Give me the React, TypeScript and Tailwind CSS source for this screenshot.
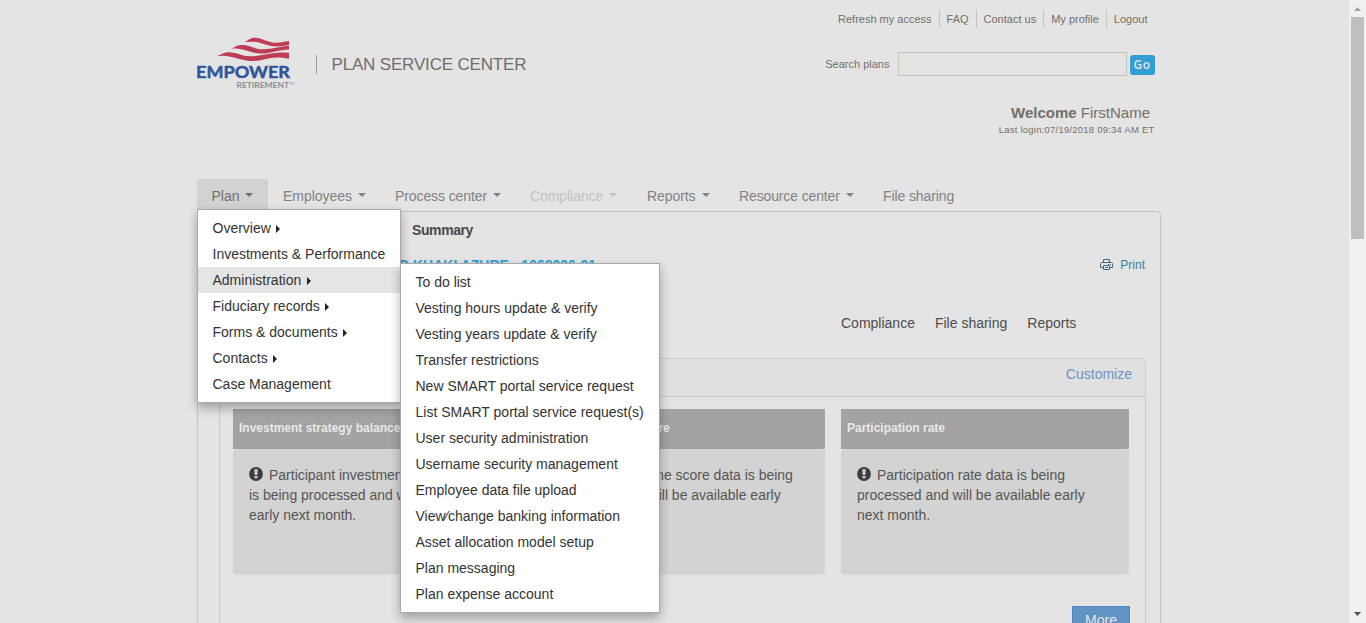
import React from 'react';

const topLinks = ['Refresh my access', 'FAQ', 'Contact us', 'My profile', 'Logout'];

const planMenu = [
  { label: 'Overview', sub: true },
  { label: 'Investments & Performance', sub: false },
  { label: 'Administration', sub: true },
  { label: 'Fiduciary records', sub: true },
  { label: 'Forms & documents', sub: true },
  { label: 'Contacts', sub: true },
  { label: 'Case Management', sub: false },
];

const adminMenu = [
  'To do list',
  'Vesting hours update & verify',
  'Vesting years update & verify',
  'Transfer restrictions',
  'New SMART portal service request',
  'List SMART portal service request(s)',
  'User security administration',
  'Username security management',
  'Employee data file upload',
  'View\u2044change banking information',
  'Asset allocation model setup',
  'Plan messaging',
  'Plan expense account',
];

function Logo() {
  return (
    <svg className="mt-[36px] block h-[54px] w-[100px] shrink-0" viewBox="0 0 100 54">
      <g fill="#be3d55">
        <path d="M48 6C51 4.500 53 1.800 58 1.800C65 1.800 70 6.500 78 6.700C84 6.700 88 5.700 92 5V9C87 9.700 84 10.400 79 10.400C70 10.400 64 6 56 5.700C53 5.500 51 5.800 48 6Z" />
        <path d="M33.700 13C38 11.500 39 9 45 9C53 9 58 13.300 66 13.300C75 13.300 84 10.300 92 9.800V13.500C82 13.500 74 17.600 64 17.600C55 17.600 49 13.200 41 12.700C38 12.500 36 12.700 33.700 13Z" />
        <path d="M19.300 20.300C24 19 26 16.300 32 16.300C40 16.300 45 20.300 53 20.300C64 20.300 74 16.500 84 16.500C87 16.500 90 16.600 92 16.800V23C88 21.800 84 21.400 80 21.400C71 21.400 64 25 56 25C45 25 37 20.400 28 19.900C25 19.700 22 20 19.300 20.300Z" />
      </g>
      <text x="-0.9" y="42" textLength="93.800" lengthAdjust="spacingAndGlyphs" fill="#31549b" stroke="#31549b" strokeWidth="0.500" className="font-['Lato'] text-[17px] font-bold">
        EMPOWER
      </text>
      <text x="39.500" y="51.700" textLength="52.500" lengthAdjust="spacingAndGlyphs" fill="#858d96" className="font-['Lato'] text-[8px] font-bold">
        RETIREMENT
      </text>
      <text x="92.500" y="48.500" fill="#858d96" className="font-['Lato'] text-[3px]">TM</text>
    </svg>
  );
}

function Nav({ label, width, caret = true, cls = 'text-[#828282]', labelCls = 'tracking-[-0.07px]' }: { label: string; width: string; caret?: boolean; cls?: string; labelCls?: string }) {
  return (
    <li className={`flex h-[32px] shrink-0 items-center pt-[2px] pl-[15px] ${width} ${cls}`}>
      <span className={`whitespace-nowrap ${labelCls}`}>{label}</span>
      {caret && (
        <svg className="mb-[2px] ml-[6px] h-[4px] w-[8px]" viewBox="0 0 8 4">
          <path d="M0 0H8L4 4Z" fill="currentColor" />
        </svg>
      )}
    </li>
  );
}

function Alert() {
  return (
    <svg className="mr-[6px] inline-block h-[14px] w-[14px] align-[-1px]" viewBox="0 0 14 14">
      <circle cx="7" cy="7" r="6.900" fill="#3d3d3d" />
      <path d="M5.300 2.300H8.700L8.300 8H5.700Z" fill="#d3d3d3" />
      <rect x="5.500" y="9" width="3" height="2.300" fill="#d3d3d3" />
    </svg>
  );
}

function Card({ title, lines }: { title: string; lines: string[] }) {
  return (
    <section className="w-[288px] shrink-0">
      <h3 className="h-[40px] bg-[#a3a3a3] pl-[6px] text-[12px] leading-[38px] font-bold whitespace-nowrap text-[#e8e8e8]">{title}</h3>
      <div className="h-[125px] rounded-[4px] bg-[#d3d3d3] px-4 pt-[16px] text-[14px] leading-[20px] tracking-[-0.01px] whitespace-nowrap text-[#555] shadow-[0_1px_1px_rgba(0,0,0,0.05)]">
        {lines.map((l, i) => (
          <p key={l}>
            {i === 0 && <Alert />}
            {l}
          </p>
        ))}
      </div>
    </section>
  );
}

function Menus() {
  return (
    <>
      <ul className="absolute top-[30px] left-0 w-[204px] border border-[#a9a9a9] bg-white py-[5px] text-[14px] leading-[26px] text-[#333] shadow-[0_5px_10px_rgba(0,0,0,0.3)]">
        {planMenu.map((m) => (
          <li key={m.label} className={`flex h-[26px] items-center pl-[14.5px] whitespace-nowrap ${m.label === 'Administration' ? 'bg-[#e5e5e5]' : ''}`}>
            {m.label}
            {m.sub && (
              <svg className="mt-[1px] ml-[5.500px] h-[8px] w-[4px]" viewBox="0 0 4 8">
                <path d="M0 0L4 4L0 8Z" fill="#222" />
              </svg>
            )}
          </li>
        ))}
      </ul>
      <ul className="absolute top-[84px] left-[203px] w-[260px] border border-[#a9a9a9] bg-white py-[5px] text-[14px] leading-[26px] text-[#333] shadow-[0_5px_10px_rgba(0,0,0,0.3)]">
        {adminMenu.map((m) => (
          <li key={m} className="h-[26px] pl-[14.5px] whitespace-nowrap">
            {m}
          </li>
        ))}
      </ul>
    </>
  );
}

export default function App() {
  return (
    <div className="flex h-[623px] w-[1366px] overflow-hidden bg-[#e4e4e4] font-['Liberation_Sans',Arial,sans-serif] text-[14px]">
      <div className="w-[1349px] shrink-0 pl-[197px]">
        <div className="w-[964px]">
          <header className="flex h-[179px] justify-between">
            <div className="flex">
              <Logo />
              <div className="mt-[55px] ml-[19px] h-[19px] w-px bg-[#9a9a9a]" />
              <h1 className="mt-[53px] ml-[14.500px] text-[17px] leading-[24px] tracking-[-0.17px] whitespace-nowrap text-[#6e6e6e]">PLAN SERVICE CENTER</h1>
            </div>
            <div className="mr-[6px] flex flex-col items-end">
              <ul className="mt-[10px] mr-[0.500px] flex text-[11px] leading-[18px] text-[#736f68]">
                {topLinks.map((l, i) => (
                  <li key={l} className={`h-[18px] px-[7px] whitespace-nowrap ${i ? 'border-l border-[#c3c3b9]' : ''}`}>
                    {l}
                  </li>
                ))}
              </ul>
              <div className="mt-[24px] flex h-[24px] text-[11px] text-[#736f68]">
                <label className="mr-[8.500px] leading-[24px]">Search plans</label>
                <div className="h-[24px] w-[229px] border border-[#c3c3b9]" />
                <button className="mt-[3px] ml-[3px] h-[20px] w-[25px] rounded-[3px] bg-[#319fd2] pr-[1px] text-center font-['Open_Sans'] text-[12px] leading-[20px] font-semibold tracking-[0.6px] text-[#e4e4e4]">Go</button>
              </div>
              <p className="mt-[28px] mr-[5px] text-[15px] leading-[18px] text-[#736f68]">
                <b>Welcome</b> FirstName
              </p>
              <p className="mt-[1px] mr-[0.500px] text-[9.5px] leading-[14px] tracking-[0.22px] text-[#736f68]">Last login:07/19/2018 09:34 AM ET</p>
            </div>
          </header>

          <nav className="relative z-10 h-[32px]">
            <ul className="flex">
              <Nav label="Plan" width="w-[71px]" cls="bg-[#d2d2d2] text-[#707070]" labelCls="-ml-[0.5px] -mr-[0.5px]" />
              <Nav label="Employees" width="w-[112px]" labelCls="tracking-[-0.03px]" />
              <Nav label="Process center" width="w-[135px]" labelCls="tracking-[-0.1px]" />
              <Nav label="Compliance" width="w-[117px]" cls="text-[#c2c2c2]" />
              <Nav label="Reports" width="w-[92px]" />
              <Nav label="Resource center" width="w-[144px]" labelCls="tracking-[-0.13px]" />
              <Nav label="File sharing" width="w-[101px]" caret={false} labelCls="tracking-[-0.1px]" />
            </ul>
            <Menus />
          </nav>

          <main className="h-[430px] rounded-t-[4px] border border-[#c3c3bf] pl-[21px]">
            <h2 className="mt-[8px] ml-[193px] h-[20px] leading-[20px] font-bold tracking-[-0.4px] text-[#484848]">Summary</h2>
            <div className="mt-[15px] mr-[15px] flex h-[20px] items-center justify-between">
              <p className="ml-[180px] pt-px text-[14px] font-bold text-[#319fd2]">D KHAKI AZURE - 1068006-01</p>
              <a className="flex items-center text-[12px] text-[#3b7f9c]">
                <svg className="mr-[7px] h-[12px] w-[13px]" viewBox="0 0 13 12" fill="none" stroke="#416687">
                  <path d="M3.500 3V0.500H9.500V3M3 8.500H0.500V4.500L1.500 3.500H11.500L12.500 4.500V8.500H10M3.500 6.500H9.500V10.500H3.500ZM5 8.500H8M8 5.500H9M10 5.500H11" />
                </svg>
                Print
              </a>
            </div>
            <ul className="mt-[38px] ml-[622px] flex h-[20px] gap-5 leading-[20px] text-[#4d4d4d]">
              <li>Compliance</li>
              <li>File sharing</li>
              <li>Reports</li>
            </ul>
            <section className="mt-[25px] h-[270px] w-[927px] rounded-t-[4px] border border-[#cacaca]">
              <div className="h-[38px] border-b border-[#cacaca] bg-[#e0e0e0] pr-[13px] text-right leading-[30px] text-[#6c93c2]">Customize</div>
              <div className="mt-[12px] ml-[13px] flex gap-4">
                <Card title="Investment strategy balance" lines={['Participant investment data', 'is being processed and will be', 'early next month.']} />
                <Card title="Lifetime income score" lines={['Lifetime Income score data is being', 'processed and will be available early', 'next month.']} />
                <Card title="Participation rate" lines={['Participation rate data is being', 'processed and will be available early', 'next month.']} />
              </div>
              <div className="mt-[32px] mr-[15px] flex justify-end">
                <button className="flex h-[32px] w-[58px] items-start justify-center border border-[#5288bd] bg-[#6194c4] leading-[26px] text-[#e4e4e4]">More</button>
              </div>
            </section>
          </main>
        </div>
      </div>
      <div className="flex h-[623px] w-[17px] shrink-0 flex-col items-center justify-between bg-[#f0f0f0]">
        <div>
          <svg className="block h-[17px] w-[17px]" viewBox="0 0 17 17">
            <path d="M5 11L8.500 7L12 11Z" fill="#a0a0a0" />
          </svg>
          <div className="ml-[2px] h-[222px] w-[13px] bg-[#bfbfbf]" />
        </div>
        <svg className="block h-[17px] w-[17px]" viewBox="0 0 17 17">
          <path d="M5 6H12L8.500 10Z" fill="#505050" />
        </svg>
      </div>
    </div>
  );
}
